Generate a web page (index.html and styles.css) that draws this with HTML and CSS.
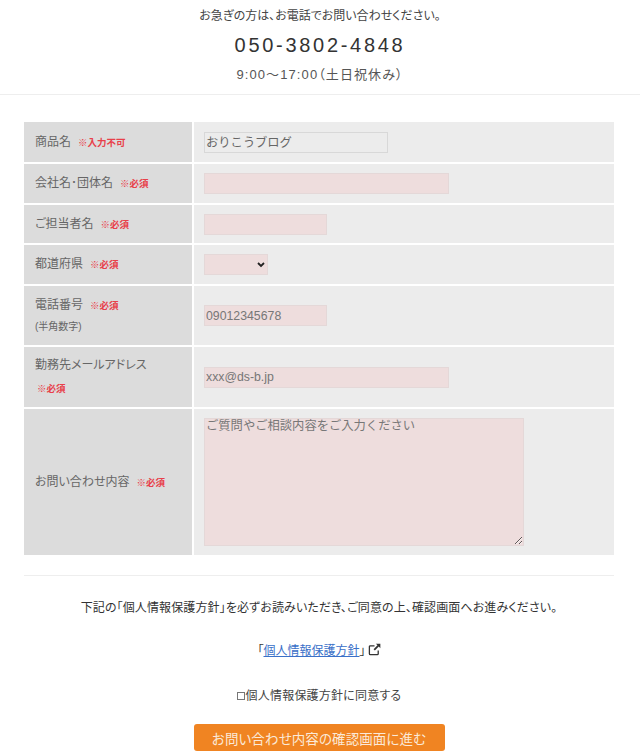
FILE: index.html
```html
<!DOCTYPE html>
<html lang="ja">
<head>
  <meta charset="UTF-8">
  <title>お問い合わせ</title>
  <link rel="stylesheet" href="styles.css">
</head>
<body>
  <header class="tel-box">
    <p class="tel-lead">お急ぎの方は、お電話でお問い合わせください。</p>
    <p class="tel-number">050-3802-4848</p>
    <p class="tel-hours">9:00～17:00（土日祝休み）</p>
  </header>

  <form class="contact-form">
    <table class="form-table">
      <tr class="row-1">
        <th>商品名<span class="req req-gap">※入力不可</span></th>
        <td><input class="field field-product" type="text" value="おりこうブログ" readonly></td>
      </tr>
      <tr class="row-1">
        <th>会社名･団体名<span class="req req-gap">※必須</span></th>
        <td><input class="field field-wide pink" type="text"></td>
      </tr>
      <tr class="row-short">
        <th>ご担当者名<span class="req req-gap">※必須</span></th>
        <td><input class="field field-short pink" type="text"></td>
      </tr>
      <tr class="row-1">
        <th>都道府県<span class="req req-gap">※必須</span></th>
        <td><select class="field field-select pink"><option></option></select></td>
      </tr>
      <tr class="row-2">
        <th>電話番号<span class="req req-gap">※必須</span><br><small class="note">(半角数字)</small></th>
        <td><input class="field field-short pink" type="text" placeholder="09012345678"></td>
      </tr>
      <tr class="row-3">
        <th>勤務先メールアドレス<br><span class="req req-block">※必須</span></th>
        <td><input class="field field-wide pink" type="text" placeholder="xxx@ds-b.jp"></td>
      </tr>
      <tr class="row-4">
        <th>お問い合わせ内容<span class="req req-gap">※必須</span></th>
        <td><textarea class="field field-area pink" placeholder="ご質問やご相談内容をご入力ください"></textarea></td>
      </tr>
    </table>

    <div class="agree">
      <p class="agree-text">下記の「個人情報保護方針」を必ずお読みいただき、ご同意の上、確認画面へお進みください。</p>
      <p class="agree-link">「<a href="#">個人情報保護方針</a>」<svg class="ext-icon" viewBox="0 0 14 14" aria-hidden="true"><path d="M7 3H2.500A1 1 0 0 0 1.500 4v7.500a1 1 0 0 0 1 1H10a1 1 0 0 0 1-1V8" fill="none" stroke="#333" stroke-width="1.400"/><path d="M8.500.8H13.300V5.600L11.600 3.900 7.400 8.100 6 6.700 10.200 2.500Z" fill="#333"/></svg></p>
      <label class="agree-check"><span class="check-box"></span>個人情報保護方針に同意する</label>
      <button class="submit-btn" type="button">お問い合わせ内容の確認画面に進む</button>
    </div>
  </form>
</body>
</html>
```

FILE: styles.css
```css
* {
  box-sizing: border-box;
}

html, body {
  height: 756px;
  overflow: hidden;
}

body {
  margin: 0;
  color: #444;
  background: #fff;
  font-family: "Liberation Sans", "Noto Sans CJK JP", sans-serif;
  font-size: 12px;
  font-feature-settings: "palt";
}

p {
  margin: 0;
}

.tel-box {
  height: 95px;
  padding-top: 7px;
  text-align: center;
  border-bottom: 1px solid #eee;
}

.tel-lead {
  font-size: 12px;
  line-height: 18px;
}

.tel-number {
  margin-top: 8px;
  font-size: 20px;
  line-height: 24px;
  letter-spacing: 2.700px;
  color: #333;
}

.tel-hours {
  margin-top: 9px;
  font-size: 13px;
  line-height: 18px;
  letter-spacing: 1.100px;
  color: #555;
}

.contact-form {
  padding: 27px 26px 0 24px;
}

.form-table {
  width: 590px;
  table-layout: fixed;
  border-collapse: collapse;
}

.form-table th,
.form-table td {
  padding: 0;
  border-bottom: 2px solid #fff;
  vertical-align: middle;
}

.form-table tr:last-child th,
.form-table tr:last-child td {
  border-bottom: 0;
}

.form-table th {
  width: 169px;
  padding-left: 11px;
  background: #dcdcdc;
  border-right: 2px solid #fff;
  color: #666;
  font-size: 12px;
  font-weight: normal;
  text-align: left;
  line-height: 18px;
}

.form-table td {
  padding-left: 10px;
  background: #ececec;
}

.row-1 { height: 41px; }
.row-short { height: 40px; }
.row-2 { height: 61px; }
.row-3 { height: 62px; }
.row-4 { height: 147px; }

.req {
  color: #e8404a;
  font-size: 9.500px;
  font-weight: bold;
}

.req-gap {
  margin-left: 7px;
}

.req-block {
  display: inline-block;
  margin: 6px 0 0 2px;
}

.note {
  display: inline-block;
  margin-top: 3px;
  font-size: 10px;
}

.field {
  display: block;
  height: 21px;
  margin: 0;
  padding: 0 1px;
  border: 1px solid #d8d8d8;
  border-radius: 0;
  background: #ececec;
  color: #666;
  font-family: inherit;
  font-size: 12.300px;
  font-feature-settings: normal;
}

.field::placeholder {
  color: #777;
  opacity: 1;
}

.pink {
  background: #eedddd;
  border-color: #e4d8d8;
}

.field-product { width: 184px; }
.field-wide { width: 245px; }
.field-short { width: 123px; }

.field-select {
  width: 64px;
  appearance: none;
  background-image: url("data:image/svg+xml,%3Csvg xmlns='http://www.w3.org/2000/svg' width='8' height='6'%3E%3Cpath d='M1 1l3 3 3-3' fill='none' stroke='%23222' stroke-width='1.800'/%3E%3C/svg%3E");
  background-repeat: no-repeat;
  background-position: right 2px center;
}

.field-area {
  width: 320px;
  height: 128px;
  padding: 0 1px;
  line-height: 14px;
  resize: both;
}

.agree {
  margin-top: 20px;
  padding-top: 23px;
  border-top: 1px solid #eee;
  text-align: center;
  color: #333;
  width: 590px;
}

.agree-text {
  font-size: 12px;
  line-height: 18px;
  letter-spacing: 0.12px;
}

.agree-link {
  margin-top: 25px;
  font-size: 12px;
  line-height: 18px;
}

.agree-link a {
  color: #3a70c8;
  text-decoration: underline;
}

.ext-icon {
  width: 13px;
  height: 13px;
  margin-left: 2px;
  vertical-align: -1px;
}

.agree-check {
  display: flex;
  justify-content: center;
  align-items: center;
  margin-top: 27px;
  font-size: 12px;
  line-height: 18px;
  color: #444;
  letter-spacing: 0.2px;
}

.check-box {
  width: 8px;
  height: 8px;
  margin-right: 1px;
  border: 1px solid #777;
  background: #fff;
}

.submit-btn {
  display: block;
  width: 251px;
  height: 27px;
  margin: 19px auto 0;
  padding: 0;
  border: 0;
  border-radius: 3px;
  background: #f08422;
  color: #fbe9d8;
  font-family: inherit;
  font-size: 13.500px;
  letter-spacing: 0.1px;
  font-feature-settings: "palt";
}
```
